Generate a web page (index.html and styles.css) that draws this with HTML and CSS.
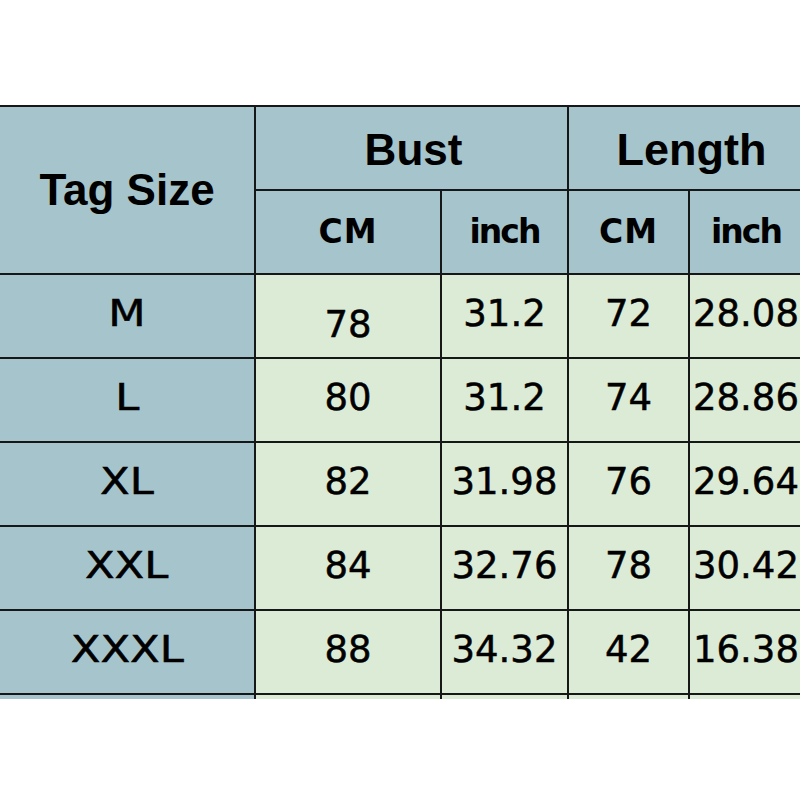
FILE: index.html
```html
<!DOCTYPE html>
<html>
<head>
<meta charset="utf-8">
<link rel="stylesheet" href="styles.css">
</head>
<body>
<div class="sheet">
  <div class="grid">
    <div class="cell head tag">Tag Size</div>
    <div class="cell head group bust">Bust</div>
    <div class="cell head group length">Length</div>
    <div class="cell head unit cm">CM</div>
    <div class="cell head unit inch">inch</div>
    <div class="cell head unit cm">CM</div>
    <div class="cell head unit inch">inch</div>

    <div class="cell size"><span class="wide">M</span></div>
    <div class="cell data low">78</div>
    <div class="cell data">31.2</div>
    <div class="cell data">72</div>
    <div class="cell data">28.08</div>

    <div class="cell size"><span class="wide">L</span></div>
    <div class="cell data">80</div>
    <div class="cell data">31.2</div>
    <div class="cell data">74</div>
    <div class="cell data">28.86</div>

    <div class="cell size"><span class="wide">XL</span></div>
    <div class="cell data">82</div>
    <div class="cell data">31.98</div>
    <div class="cell data">76</div>
    <div class="cell data">29.64</div>

    <div class="cell size"><span class="wide">XXL</span></div>
    <div class="cell data">84</div>
    <div class="cell data">32.76</div>
    <div class="cell data">78</div>
    <div class="cell data">30.42</div>

    <div class="cell size"><span class="wide">XXXL</span></div>
    <div class="cell data">88</div>
    <div class="cell data">34.32</div>
    <div class="cell data">42</div>
    <div class="cell data">16.38</div>

    <div class="cell size stub"></div>
    <div class="cell data stub"></div>
    <div class="cell data stub"></div>
    <div class="cell data stub"></div>
    <div class="cell data stub"></div>
  </div>
</div>
</body>
</html>
```
FILE: styles.css
```css
html, body {
  margin: 0;
  padding: 0;
  background: #ffffff;
  overflow: hidden;
  width: 800px;
  height: 800px;
}

.sheet {
  padding-top: 105px;
  width: 812px;
}

.grid {
  display: grid;
  grid-template-columns: 254px 184px 125px 119px 112px;
  grid-template-rows: 82px 82px 82px 82px 82px 82px 82px 4px;
  column-gap: 2px;
  row-gap: 2px;
  background: #161818;
  border-top: 2px solid #161818;
  width: max-content;
}

.cell {
  display: flex;
  align-items: center;
  justify-content: center;
  color: #000000;
  white-space: nowrap;
  overflow: visible;
}

.head {
  background: #a6c4cb;
  font-family: "Liberation Sans", Arial, sans-serif;
  font-weight: bold;
}

.tag {
  grid-row: 1 / span 2;
  font-size: 44px;
}

.group {
  grid-column: span 2;
  font-size: 44px;
  padding-top: 3px;
}

.bust {
  padding-left: 4px;
}

.length {
  font-size: 45px;
  padding-left: 12px;
}

.unit {
  font-family: "DejaVu Sans", sans-serif;
  font-weight: bold;
  font-size: 33px;
  padding-bottom: 2px;
}

.cm {
  letter-spacing: 1px;
}

.inch {
  letter-spacing: -2px;
}

.size {
  background: #a6c4cb;
  font-family: "DejaVu Sans", sans-serif;
  font-size: 37px;
  padding-bottom: 5px;
  -webkit-text-stroke: 0.5px #000000;
}

.wide {
  display: inline-block;
  transform: scaleX(1.17);
}

.data {
  background: #dcebd5;
  font-family: "DejaVu Sans", sans-serif;
  font-size: 37px;
  padding-bottom: 5px;
  -webkit-text-stroke: 0.5px #000000;
}

.low {
  padding-bottom: 0;
  padding-top: 16px;
}

.stub {
  padding: 0;
}
```
